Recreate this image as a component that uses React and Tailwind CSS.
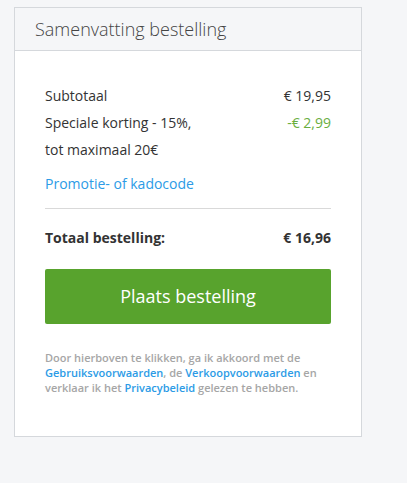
import React from 'react';

const font = { fontFamily: '"Open Sans", sans-serif' };

const Row = ({ label, value, valueClass = 'text-[#333]', bold }) => (
  <div className={`flex items-start justify-between leading-[27px] ${bold ? 'font-bold' : ''}`}>
    <span>{label}</span>
    <span className={valueClass}>{value}</span>
  </div>
);

export default function App() {
  return (
    <div className="min-h-screen bg-[#f5f6f8] pt-[7px] pl-[14px]" style={font}>
      <div className="w-[348px] border border-[#d5d8dc] bg-white">
        {/* Header */}
        <div className="h-[43px] border-b border-[#d5d8dc] bg-[#f5f6f8] pl-5 flex items-center">
          <h2 className="text-[18px] font-light text-[#444]">Samenvatting bestelling</h2>
        </div>

        {/* Body */}
        <div className="px-[30px] pt-[31px] pb-[41px] text-[14px] text-[#333]">
          <Row label="Subtotaal" value="€ 19,95" />
          <div className="flex items-start justify-between leading-[27px]">
            <span>
              Speciale korting - 15%,
              <br />
              tot maximaal 20€
            </span>
            <span className="text-[#6aae3f]">-€ 2,99</span>
          </div>
          <a className="block mt-[7px] leading-[27px] text-[#2c9be6]" href="#">
            Promotie- of kadocode
          </a>

          <div className="mt-[11px] border-t border-[#d9d9d9]" />

          <div className="pt-[15px]">
            <Row label="Totaal bestelling:" value="€ 16,96" bold />
          </div>

          <button className="mt-[18px] w-full h-[55px] rounded-[2px] bg-[#58a32d] text-white text-[18px]">
            Plaats bestelling
          </button>

          <p className="mt-[26px] text-[11px] leading-[15px] font-semibold text-[#a6a6a6]">
            Door hierboven te klikken, ga ik akkoord met de{' '}
            <a className="text-[#2c9be6]" href="#">Gebruiksvoorwaarden</a>, de{' '}
            <a className="text-[#2c9be6]" href="#">Verkoopvoorwaarden</a> en verklaar ik het{' '}
            <a className="text-[#2c9be6]" href="#">Privacybeleid</a> gelezen te hebben.
          </p>
        </div>
      </div>
    </div>
  );
}
